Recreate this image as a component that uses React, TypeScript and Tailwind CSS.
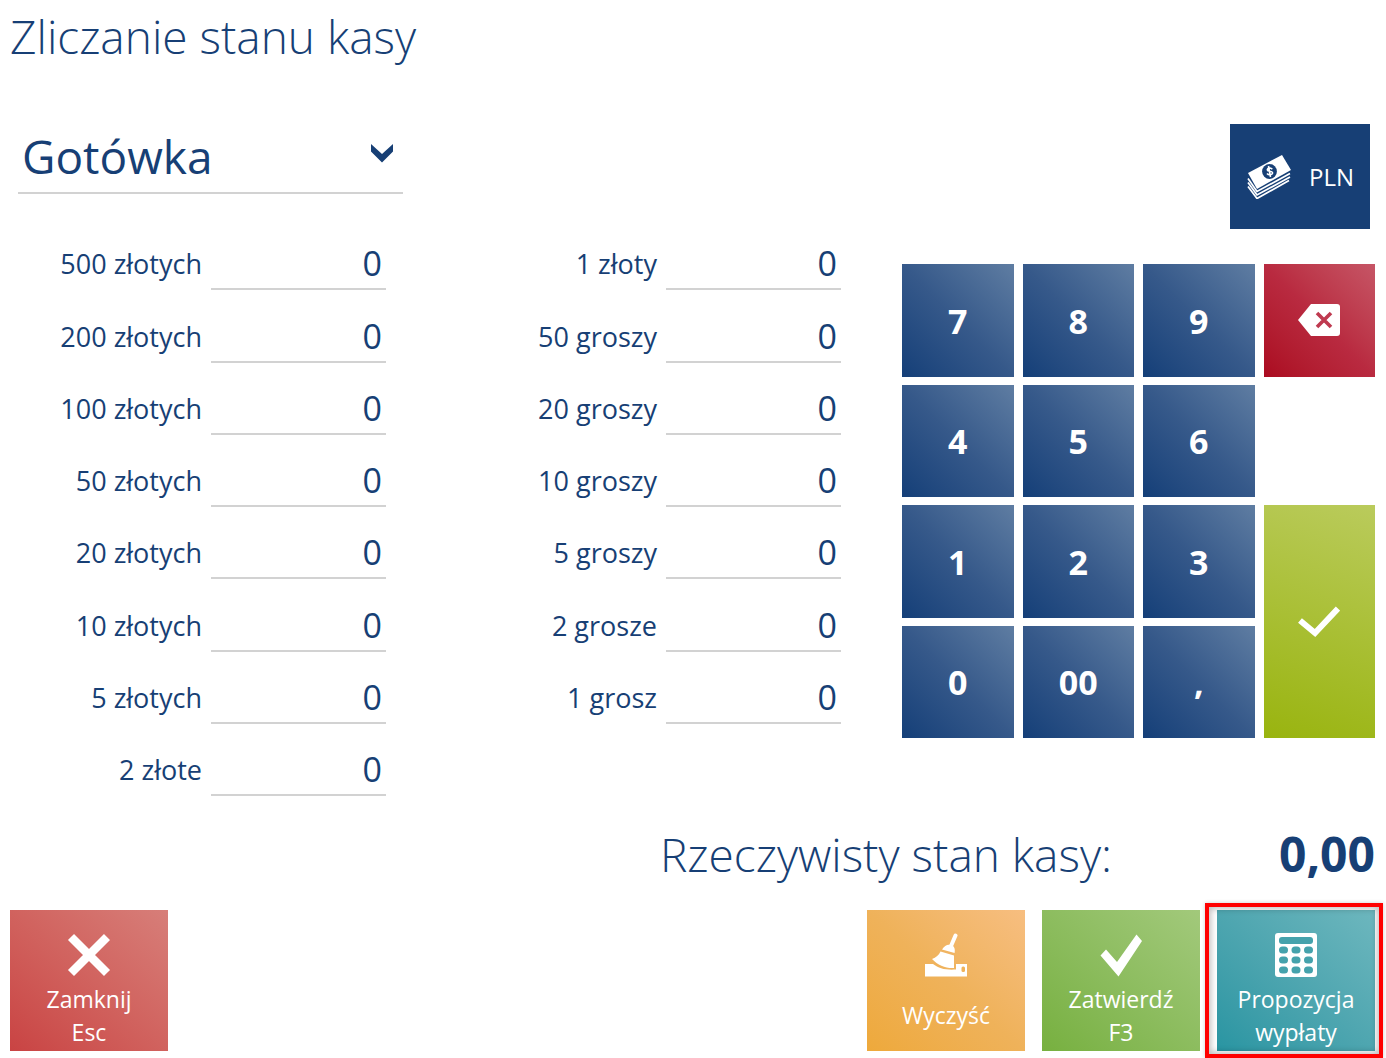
import { useState } from 'react';
import type { ReactNode } from 'react';
import clsx from 'clsx';

type Denomination = {
  id: string;
  label: string;
};

const banknotes: Denomination[] = [
  { id: 'zl-500', label: '500 złotych' },
  { id: 'zl-200', label: '200 złotych' },
  { id: 'zl-100', label: '100 złotych' },
  { id: 'zl-50', label: '50 złotych' },
  { id: 'zl-20', label: '20 złotych' },
  { id: 'zl-10', label: '10 złotych' },
  { id: 'zl-5', label: '5 złotych' },
  { id: 'zl-2', label: '2 złote' },
];

const coins: Denomination[] = [
  { id: 'zl-1', label: '1 złoty' },
  { id: 'gr-50', label: '50 groszy' },
  { id: 'gr-20', label: '20 groszy' },
  { id: 'gr-10', label: '10 groszy' },
  { id: 'gr-5', label: '5 groszy' },
  { id: 'gr-2', label: '2 grosze' },
  { id: 'gr-1', label: '1 grosz' },
];

function CashIcon() {
  return (
    <svg viewBox="0 0 44 44" className="h-11 w-11" aria-hidden="true">
      <path d="M1 18 35 0l9 15L10 34Z" fill="#fff" />
      <circle cx="22.500" cy="16.500" r="7.400" fill="#173f75" />
      <path
        d="M25.300 14.200c-1.700-2-5.300-1.200-4.900.8.400 1.900 4.700.4 5.100 2.600.4 2.200-3.700 3-5.500.8M21.500 11l2 11"
        fill="none"
        stroke="#fff"
        strokeWidth="1.600"
      />
      <path
        d="M1 23.500 10 36.500 43 18.500M1 27.500l9 12.500 33-18M1 31.500l9 12L42 25.500"
        fill="none"
        stroke="#fff"
        strokeWidth="1.700"
      />
    </svg>
  );
}

function BackspaceIcon() {
  return (
    <svg viewBox="0 0 42 32" className="h-8 w-[42px]" aria-hidden="true">
      <path d="M13 0h26a3 3 0 0 1 3 3v26a3 3 0 0 1-3 3H13L0 16Z" fill="#fff" />
      <path d="m19 9 14 14M33 9 19 23" fill="none" stroke="#bf3a50" strokeWidth="3.600" />
    </svg>
  );
}

function EnterIcon() {
  return (
    <svg viewBox="0 0 42 32" className="h-8 w-[42px]" aria-hidden="true">
      <path d="m2 14.500 15 12.500L40 2.500" fill="none" stroke="#fff" strokeWidth="6" />
    </svg>
  );
}

function CloseIcon() {
  return (
    <svg viewBox="0 0 44 44" className="size-11" aria-hidden="true">
      <path d="m4 4 36 36M40 4 4 40" fill="none" stroke="#fff" strokeWidth="8.500" />
    </svg>
  );
}

function BroomIcon() {
  return (
    <svg viewBox="0 0 44 44" className="size-11" aria-hidden="true">
      <path d="M31.500 2.500 27 13" fill="none" stroke="#fff" strokeWidth="4" strokeLinecap="round" />
      <path d="M18 16.500c2.500-4.500 6-5.500 9-4.500 3.500 1 4.300 4 3.600 8Z" fill="#fff" />
      <path d="m16.500 18.500 13.500 4V35c-8 .5-16-2.500-22-9 4-1.500 7-4 8.500-7.500Z" fill="#fff" />
      <path d="M1 31h8c6 4.500 12.500 6.200 23 5.500V31h11v12.500H1Z" fill="#fff" />
      <rect x="37.500" y="33.500" width="3.500" height="5.500" rx="1.500" fill="#efb25a" />
    </svg>
  );
}

function AcceptIcon() {
  return (
    <svg viewBox="0 0 44 44" className="size-11" aria-hidden="true">
      <path d="m1.500 22.500 5.500-6L18 29 37.500 1.500 43 8 19.500 43.500Z" fill="#fff" />
    </svg>
  );
}

function CalculatorIcon() {
  return (
    <svg viewBox="0 0 44 44" className="size-11" aria-hidden="true">
      <rect x="1" y="0" width="42" height="44" rx="3" fill="#fff" />
      <rect x="5" y="4" width="34" height="7" rx="3" fill="#45a2ac" />
      {[13.5, 23.5, 33.5].map((y) =>
        [5, 17.5, 30].map((x) => (
          <rect key={`${x}-${y}`} x={x} y={y} width="9" height="7" rx="3.500" fill="#45a2ac" />
        )),
      )}
    </svg>
  );
}

type CountFieldProps = {
  item: Denomination;
  value: string;
  onFocus: () => void;
  onChange: (value: string) => void;
};

function CountField({ item, value, onFocus, onChange }: CountFieldProps) {
  return (
    <div className="flex items-end">
      <label htmlFor={item.id} className="flex-1 pr-[9px] pb-1.5 text-right text-[27px] leading-10">
        {item.label}
      </label>
      <input
        id={item.id}
        inputMode="numeric"
        value={value}
        onFocus={onFocus}
        onChange={(e) => onChange(e.target.value)}
        className="h-[52px] w-[175px] border-b-2 border-[#d2d2d2] pr-1 text-right text-[34px] outline-none"
      />
    </div>
  );
}

type KeyProps = {
  label: string;
  className?: string;
  onClick: () => void;
  children?: ReactNode;
};

function Key({ label, className, onClick, children }: KeyProps) {
  return (
    <button
      type="button"
      aria-label={label}
      onClick={onClick}
      className={clsx(
        'flex items-center justify-center text-[34px] font-bold text-white',
        className ?? 'bg-linear-to-tr from-[#143f78] via-[#36598a] to-[#5f7da2] pt-0.5',
      )}
    >
      {children ?? label}
    </button>
  );
}

type ActionButtonProps = {
  lines: string[];
  icon: ReactNode;
  className: string;
  onClick?: () => void;
};

function ActionButton({ lines, icon, className, onClick }: ActionButtonProps) {
  return (
    <button
      type="button"
      onClick={onClick}
      className={clsx(
        'flex h-[141px] w-[158px] flex-col items-center bg-linear-to-tr pt-[23px] text-[23px] leading-[33px] text-white',
        className,
      )}
    >
      {icon}
      <span className={clsx('flex flex-col', lines.length > 1 ? 'pt-1.5' : 'pt-[22px]')}>
        {lines.map((line) => (
          <span key={line}>{line}</span>
        ))}
      </span>
    </button>
  );
}

export default function App() {
  const [counts, setCounts] = useState<Record<string, string>>({});
  const [active, setActive] = useState('zl-500');

  const setCount = (id: string, value: string) => {
    setCounts((prev) => ({ ...prev, [id]: value.replace(/^0+(?=\d)/, '') || '0' }));
  };

  const press = (key: string) => setCount(active, (counts[active] ?? '0') + key);
  const erase = () => setCount(active, (counts[active] ?? '0').slice(0, -1));

  const total = [...banknotes, ...coins].reduce((sum, { id }) => {
    const [unit, amount] = id.split('-');
    const value = unit === 'zl' ? Number(amount) * 100 : Number(amount);
    return sum + value * (parseInt(counts[id] ?? '0', 10) || 0);
  }, 0);

  const renderField = (item: Denomination) => (
    <CountField
      key={item.id}
      item={item}
      value={counts[item.id] ?? '0'}
      onFocus={() => setActive(item.id)}
      onChange={(value) => setCount(item.id, value)}
    />
  );

  return (
    <div className="min-h-screen bg-white pr-[11px] pb-[7px] pl-2.5 font-['Open_Sans','Noto_Sans',sans-serif] text-[#173f75]">
      <header className="h-[124px] pt-0.5">
        <h1 className="text-[46px] leading-[68px] font-light">Zliczanie stanu kasy</h1>
      </header>

      <main className="flex items-start pl-2">
        <section className="flex-1 pr-[61px]">
          <div className="relative w-[385px]">
            <select
              aria-label="Forma płatności"
              className="h-[70px] w-full appearance-none border-b-2 border-[#d2d2d2] bg-transparent pb-1 pl-1 text-[46px] leading-[64px] outline-none"
            >
              <option>Gotówka</option>
            </select>
            <svg
              viewBox="0 0 22 20"
              className="pointer-events-none absolute top-5 right-2.5 h-5 w-[22px]"
              aria-hidden="true"
            >
              <path d="m0 0 11 10L22 0v7.500L11 18.500 0 7.500Z" fill="#173f75" />
            </svg>
          </div>

          <div className="mt-6 grid h-[578px] grid-cols-2 gap-x-[87px]">
            <div className="grid grid-rows-8">{banknotes.map(renderField)}</div>
            <div className="grid grid-rows-8">{coins.map(renderField)}</div>
          </div>
        </section>

        <section className="flex w-[473px] flex-col">
          <button
            type="button"
            className="mr-[5px] flex h-[105px] w-[140px] items-center gap-[18px] self-end bg-[#173f75] pl-[17px] text-2xl text-white"
          >
            <CashIcon />
            PLN
          </button>

          <div className="mt-[35px] grid h-[474px] grid-cols-4 grid-rows-4 gap-x-[9px] gap-y-2">
            {['7', '8', '9'].map((n) => (
              <Key key={n} label={n} onClick={() => press(n)} />
            ))}
            <Key
              label="Usuń"
              onClick={erase}
              className="bg-linear-to-tr from-[#ab0a20] via-[#b92a40] to-[#c65566]"
            >
              <BackspaceIcon />
            </Key>
            {['4', '5', '6'].map((n) => (
              <Key key={n} label={n} onClick={() => press(n)} />
            ))}
            <div />
            {['1', '2', '3'].map((n) => (
              <Key key={n} label={n} onClick={() => press(n)} />
            ))}
            <Key
              label="Zatwierdź"
              onClick={() => setActive('zl-500')}
              className="row-span-2 bg-linear-[20deg] from-[#99b40f] to-[#bacb5c]"
            >
              <EnterIcon />
            </Key>
            {['0', '00', ','].map((n) => (
              <Key key={n} label={n} onClick={() => press(n)} />
            ))}
          </div>
        </section>
      </main>

      <div className="mt-[26px] flex h-16 items-center justify-end">
        <span className="text-[46px] leading-[64px] font-light">Rzeczywisty stan kasy:</span>
        <output className="w-[263px] text-right text-[48px] leading-[64px] font-bold">
          {(total / 100).toFixed(2).replace('.', ',')}
        </output>
      </div>

      <footer className="mt-6 flex justify-between">
        <ActionButton
          lines={['Zamknij', 'Esc']}
          icon={<CloseIcon />}
          className="from-[#c94343] to-[#d77e79]"
        />
        <div className="flex gap-[17px]">
          <ActionButton
            lines={['Wyczyść']}
            icon={<BroomIcon />}
            className="from-[#eea93b] via-[#efb25a] to-[#f7be80]"
            onClick={() => setCounts({})}
          />
          <ActionButton
            lines={['Zatwierdź', 'F3']}
            icon={<AcceptIcon />}
            className="from-[#77b03f] to-[#a2c97b]"
          />
          <div className="relative">
            <ActionButton
              lines={['Propozycja', 'wypłaty']}
              icon={<CalculatorIcon />}
              className="from-[#2895a2] to-[#6db7be]"
            />
            <div className="pointer-events-none absolute -top-[7px] -right-2 -bottom-[7px] -left-3 border-4 border-[#ff0000] shadow-[inset_0_0_6px_2px_rgba(0,0,0,0.25),0_0_4px_rgba(0,0,0,0.2)]" />
          </div>
        </div>
      </footer>
    </div>
  );
}
